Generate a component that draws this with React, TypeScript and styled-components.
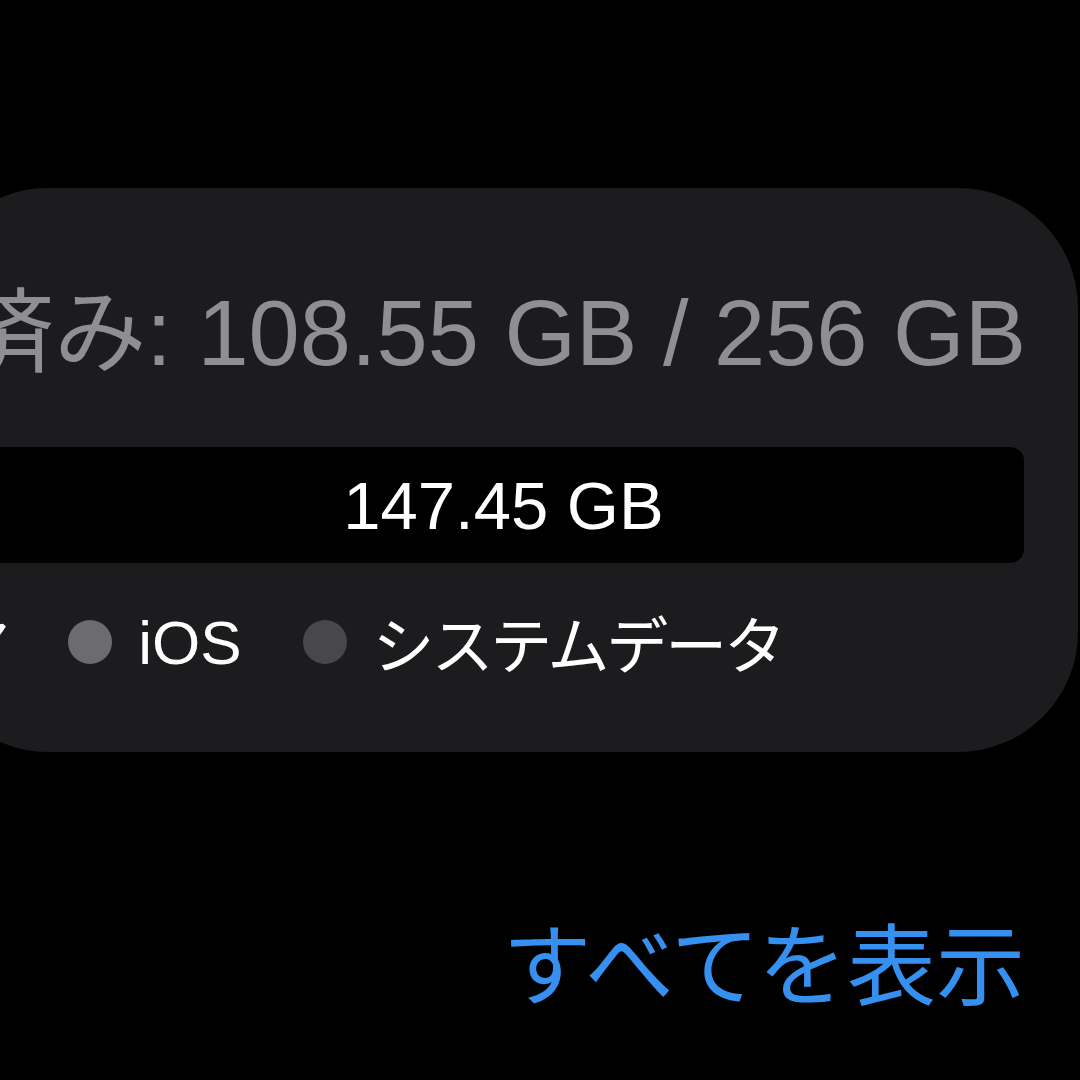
import styled, { createGlobalStyle } from 'styled-components';

const GlobalStyle = createGlobalStyle`
  html, body {
    margin: 0;
    padding: 0;
    background: #000;
  }
  body {
    font-family: 'Liberation Sans', 'Noto Sans CJK JP', sans-serif;
  }
`;

const Screen = styled.div`
  width: 1080px;
  height: 1080px;
  overflow: hidden;
  background: #000;
  display: flex;
  flex-direction: column;
`;

const StorageCard = styled.section`
  box-sizing: border-box;
  width: 1150px;
  height: 564px;
  margin: 188px 0 0 -72px;
  padding: 91px 52px 0 55px;
  background: #1c1c1e;
  border-radius: 120px;
  display: flex;
  flex-direction: column;
`;

const UsageTitle = styled.div`
  display: flex;
  justify-content: flex-end;
  height: 108px;
  line-height: 108px;
  font-size: 92px;
  color: #8e8e93;
  white-space: nowrap;
`;

const Bar = styled.div`
  margin: 60px 2px 0 0;
  height: 116px;
  border-radius: 14px;
  background: #000;
  display: flex;
  align-items: center;
  justify-content: center;
  font-size: 67px;
  color: #fff;
`;

const Legend = styled.ul`
  list-style: none;
  margin: 48px 0 0;
  padding: 0 243px 0 0;
  height: 62px;
  display: flex;
  align-items: center;
  justify-content: flex-end;
  gap: 61px;
  white-space: nowrap;
`;

const LegendItem = styled.li`
  display: flex;
  align-items: center;
  gap: 26px;
  font-size: 62px;
  color: #fff;
`;

const Dot = styled.span<{ $color: string }>`
  flex: none;
  width: 44px;
  height: 44px;
  border-radius: 50%;
  background: ${({ $color }) => $color};
`;

const Label = styled.span<{ $jp?: boolean }>`
  letter-spacing: ${({ $jp }) => ($jp ? '-3.1px' : '0')};
`;

const Footer = styled.div`
  display: flex;
  justify-content: flex-end;
  padding: 171px 55px 0 0;
`;

const ShowAll = styled.a`
  font-size: 89px;
  line-height: 1;
  color: #3590f0;
  text-decoration: none;
  cursor: pointer;
`;

const legend = [
  { label: 'メディア', color: '#8a8a8e', jp: true },
  { label: 'iOS', color: '#6c6c70', jp: false },
  { label: 'システムデータ', color: '#48484b', jp: true },
];

export default function App() {
  return (
    <>
      <GlobalStyle />
      <Screen>
        <StorageCard>
          <UsageTitle>使用済み: 108.55 GB / 256 GB</UsageTitle>
          <Bar>147.45 GB</Bar>
          <Legend>
            {legend.map((item) => (
              <LegendItem key={item.label}>
                <Dot $color={item.color} />
                <Label $jp={item.jp}>{item.label}</Label>
              </LegendItem>
            ))}
          </Legend>
        </StorageCard>
        <Footer>
          <ShowAll>すべてを表示</ShowAll>
        </Footer>
      </Screen>
    </>
  );
}
